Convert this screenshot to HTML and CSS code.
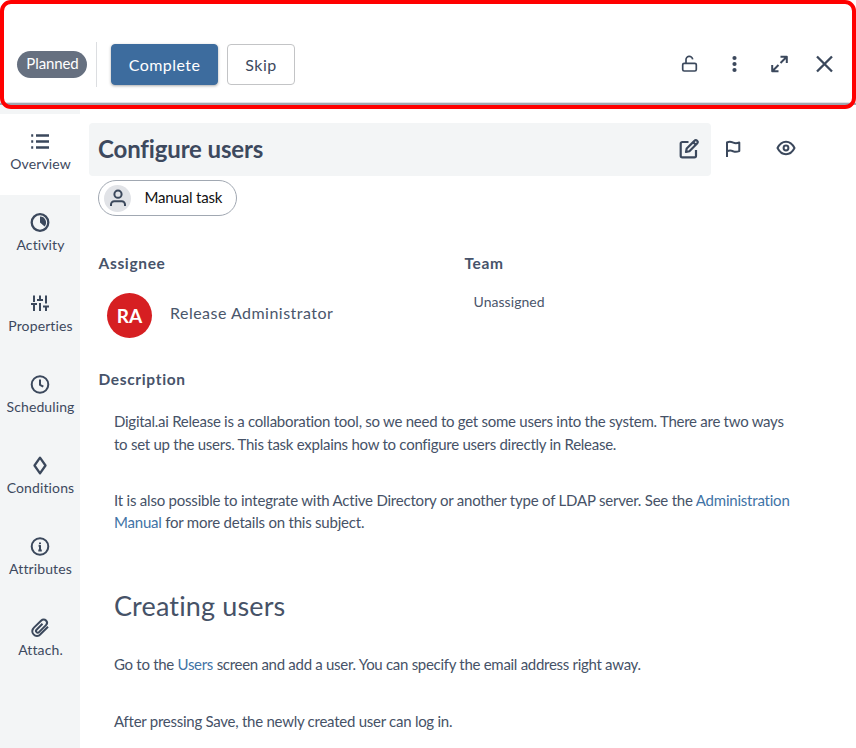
FILE: index.html
```html
<!DOCTYPE html>
<html lang="en">
<head>
<meta charset="utf-8">
<title>Configure users</title>
<link rel="stylesheet" href="styles.css">
</head>
<body>
<div class="app">
  <header class="topbar">
    <span class="status">Planned</span>
    <span class="divider"></span>
    <button class="btn primary">Complete</button>
    <button class="btn">Skip</button>
    <div class="tools">
      <svg class="icon lock" viewBox="0 0 20 20"><rect x="3.200" y="9.300" width="13.600" height="7.700" rx="1.500"/><path d="M6.500 9V6.200a3.300 3.300 0 0 1 6.700-.9"/></svg>
      <svg class="icon solid" viewBox="0 0 20 20"><circle cx="10" cy="4" r="2.100"/><circle cx="10" cy="10" r="2.100"/><circle cx="10" cy="16" r="2.100"/></svg>
      <svg class="icon expand" viewBox="0 0 20 20"><path d="M11 2.700h6.300V9M17 3l-6 6M9 17.300H2.700V11M3 17l6-6"/></svg>
      <svg class="icon cross" viewBox="0 0 20 20"><path d="M2.500 2.500l15 15M17.500 2.500l-15 15"/></svg>
    </div>
  </header>
  <div class="body">
    <nav class="side">
      <a class="item active"><svg class="icon nav-icon" viewBox="0 0 20 20"><path class="heavy" d="M6 4.500h13M6 10.500h13M6 16.500h13M1.200 4.500h2M1.200 10.500h2M1.200 16.500h2"/></svg><span>Overview</span></a>
      <a class="item"><svg class="icon nav-icon" viewBox="0 0 20 20"><circle class="heavy" cx="10" cy="10.500" r="8.300"/><path class="fill" d="M10 4.500a6 6 0 0 1 4.600 9.900L10 10.500z"/></svg><span>Activity</span></a>
      <a class="item"><svg class="icon nav-icon" viewBox="0 0 20 20"><path d="M4 2.500v6.500M4 12v6M10 2.500v4M10 10v8M16 2.500v8M16 14v4M1 11h6M7 7h6M13 13.500h6"/></svg><span>Properties</span></a>
      <a class="item"><svg class="icon nav-icon" viewBox="0 0 20 20"><circle cx="10" cy="10.500" r="8.300"/><path d="M10 5.500v5.300l3.300 1.900"/></svg><span>Scheduling</span></a>
      <a class="item"><svg class="icon nav-icon" viewBox="0 0 20 20"><path class="heavy" d="M10 2.700l5.500 7.800-5.500 7.800L4.500 10.500z"/></svg><span>Conditions</span></a>
      <a class="item"><svg class="icon nav-icon" viewBox="0 0 20 20"><circle cx="10" cy="10.500" r="8.300"/><path d="M8.600 9.700H10v4.600M8.300 14.500h3.500M10 6.400v1.600"/></svg><span>Attributes</span></a>
      <a class="item"><svg class="icon nav-icon" viewBox="0 0 20 20"><path d="M18 9.700l-7.600 7.600a4.500 4.500 0 0 1-6.800.1 4.500 4.500 0 0 1 .1-6.500l7.600-7.400a3.300 3.300 0 0 1 4.700 0 3.300 3.300 0 0 1 0 4.600l-7 7a1.700 1.700 0 0 1-2.500 0 1.700 1.700 0 0 1 0-2.400l6-6"/></svg><span>Attach.</span></a>
    </nav>
    <main class="main">
      <div class="title-row">
        <div class="title-box">
          <h1>Configure users</h1>
          <svg class="icon edit" viewBox="0 0 20 20"><path d="M9.500 3H3.300A1.600 1.600 0 0 0 1.700 4.600v12.100a1.600 1.600 0 0 0 1.600 1.600h12.100a1.600 1.600 0 0 0 1.600-1.600V11"/><path d="M7 13l.7-3.500 8-7.900a1.500 1.500 0 0 1 2.200 0l.4.400a1.500 1.500 0 0 1 0 2.200l-7.900 8z M14.300 3.300l2.400 2.400"/></svg>
        </div>
        <svg class="icon flag" viewBox="0 0 20 20"><path d="M4 19V4.500c3-1.600 4.600-.5 6.300.2s3.400.8 6-.2v8.600c-2.600 1-4.300.9-6 .2S7 11.800 4 13.400"/></svg>
        <svg class="icon eye" viewBox="0 0 20 20"><path d="M1.500 10C3.500 6 6.500 3.700 10 3.700S16.500 6 18.500 10c-2 4-5 6.200-8.500 6.200S3.500 14 1.500 10z"/><circle cx="10" cy="10" r="2.400"/></svg>
      </div>
      <div class="chip"><span class="chip-icon"><svg class="icon person" viewBox="0 0 20 20"><circle cx="10" cy="6.200" r="3.600"/><path d="M3 18v-1.500a3.300 3.300 0 0 1 3.300-3.300h7.400a3.300 3.300 0 0 1 3.300 3.300V18"/></svg></span><span class="chip-text">Manual task</span></div>
      <div class="people">
        <section class="assignee">
          <h2>Assignee</h2>
          <div class="person-row"><span class="avatar">RA</span><span class="name">Release Administrator</span></div>
        </section>
        <section>
          <h2>Team</h2>
          <div class="team">Unassigned</div>
        </section>
      </div>
      <h2 class="desc-title">Description</h2>
      <article class="desc">
        <p>Digital.ai Release is a collaboration tool, so we need to get some users into the system. There are two ways<br>to set up the users. This task explains how to configure users directly in Release.</p>
        <p class="wide">It is also possible to integrate with Active Directory or another type of LDAP server. See the <a>Administration</a><br><a>Manual</a> for more details on this subject.</p>
        <h3>Creating users</h3>
        <p class="narrow">Go to the <a>Users</a> screen and add a user. You can specify the email address right away.</p>
        <p>After pressing Save, the newly created user can log in.</p>
      </article>
    </main>
  </div>
  <div class="highlight"></div>
</div>
</body>
</html>
```
FILE: styles.css
```css
* { box-sizing: border-box; }
body { margin: 0; background: #fff; color: #3d495e; font-family: Lato, "Liberation Sans", sans-serif; font-variant-ligatures: none; }
h1, h2, h3, p { margin: 0; }
.app { position: relative; width: 856px; height: 748px; overflow: hidden; display: flex; flex-direction: column; }
.icon { width: 20px; height: 20px; flex: none; fill: none; stroke: #3b485c; stroke-width: 2; stroke-linejoin: round; }
.solid, .fill { fill: #3b485c; stroke: none; }
.lock { stroke-width: 1.7; }
.cross, .heavy { stroke-width: 2.3; }
.edit { stroke-width: 2.2; }

.topbar { height: 105px; flex: none; display: flex; align-items: center; padding: 26px 22px 0 17px; border-bottom: 2px solid #a0a7b1; box-shadow: inset 0 -1px #e1e3e7; }
.status { width: 70px; height: 27px; padding-left: 1px; border-radius: 14px; background: #667080; color: #fff; font-size: 15px; line-height: 25px; text-align: center; letter-spacing: -.1px; }
.divider { width: 1px; height: 45px; margin: 0 14px 0 9px; background: #dcdee1; }
.btn { height: 41px; width: 68px; padding: 0; background: #fff; border: 1px solid #c3c4c6; border-radius: 4px; color: #3d495e; font: 16px Lato, sans-serif; letter-spacing: .45px; }
.btn.primary { width: 107px; margin-right: 9px; border-color: #3d6c9e; background: #3d6c9e; color: #fff; box-shadow: 0 1px 3px #0005; }
.tools { margin: -1px 0 0 auto; display: flex; gap: 25px; }
.tools .icon { translate: .5px 0; }

.body { flex: 1; display: flex; }
.side { width: 80px; padding-top: 9px; background: #f3f5f6; }
.item { display: flex; flex-direction: column; align-items: center; height: 81px; padding-top: 17px; font-size: 14px; line-height: 20px; letter-spacing: .12px; white-space: nowrap; }
.item span { padding-left: 1px; }
.item.active { background: #fff; }
.nav-icon { margin-bottom: 3px; }

.main { flex: 1; padding: 18px 0 0 9px; }
.title-row { display: flex; align-items: center; }
.title-box { width: 622px; height: 53px; padding: 0 12px 2px 9px; border-radius: 4px; background: #f3f5f6; display: flex; align-items: center; justify-content: space-between; }
h1 { font-size: 24px; font-weight: 700; line-height: 32px; letter-spacing: -.14px; }
.flag { margin: -3px 0 0 12px; }
.eye { margin: -3px 0 0 33px; }
.chip { width: 139px; height: 36px; margin: 4px 0 0 9px; border: 1px solid #a1a8b2; border-radius: 18px; display: flex; align-items: center; padding-left: 5px; color: #111; font-size: 15px; letter-spacing: -.18px; }
.chip-icon { width: 27px; height: 27px; margin-right: 13.500px; border-radius: 50%; background: #e1e3e7; display: flex; align-items: center; justify-content: center; }
.chip-text { margin-top: -2px; }
.people { display: flex; padding: 36px 0 0 9.500px; height: 152px; }
.assignee { width: 366px; }
h2 { font-size: 15.500px; font-weight: 700; line-height: 22px; letter-spacing: .65px; color: #47536a; }
.person-row { display: flex; align-items: center; margin: 19px 0 0 8.500px; }
.avatar { width: 45px; height: 45px; border-radius: 50%; background: #d61f22; color: #fff; font-size: 19px; font-weight: 700; line-height: 46px; text-align: center; }
.name { margin: -6px 0 0 18px; font-size: 16px; letter-spacing: .48px; color: #4a566b; }
.team { margin: 18px 0 0 9px; font-size: 14px; line-height: 20px; letter-spacing: .05px; color: #4a566b; }
.desc-title { margin-left: 9.500px; }
.desc { margin: 20px 0 0 25px; font-size: 15px; line-height: 22.500px; letter-spacing: -.26px; white-space: nowrap; color: #465267; }
.desc p { margin-bottom: 34px; }
.desc .wide { line-height: 22px; letter-spacing: -.215px; }
.desc .narrow { letter-spacing: -.29px; }
.desc a { color: #4173a6; }
.desc h3 { margin: 55px 0 29px; font-size: 27px; font-weight: 400; line-height: 36px; letter-spacing: .15px; }

.highlight { position: absolute; inset: 0 0 auto; height: 109px; border: 4px solid #f00; border-radius: 11px; pointer-events: none; }
```
